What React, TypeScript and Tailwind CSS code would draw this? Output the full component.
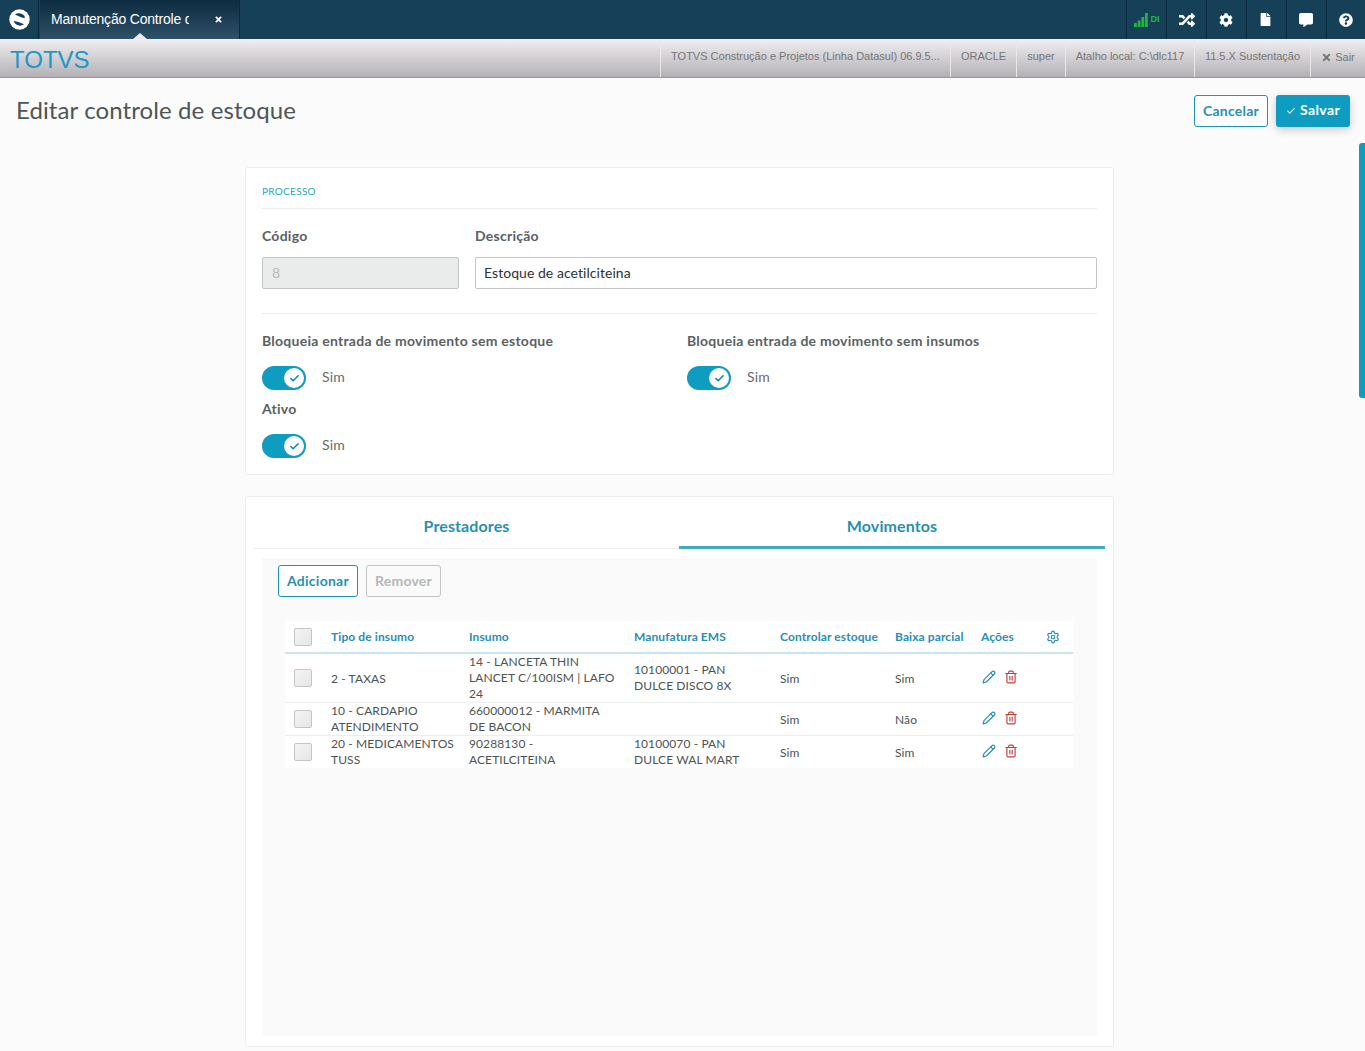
import { FaRandom, FaCog, FaFile, FaCommentAlt, FaQuestionCircle, FaTimes } from 'react-icons/fa'
import { Pencil, Trash2, Settings, Check } from 'lucide-react'

const font = "font-['Lato','Open_Sans',sans-serif]"

const topIcons = [
  <FaRandom key="random" className="text-[16px]" />,
  <FaCog key="cog" className="text-[14px] mr-[2px]" />,
  <FaFile key="file" className="text-[13px] mr-[2px]" />,
  <FaCommentAlt key="comment" className="text-[14px] mt-px mr-[2px]" />,
  <FaQuestionCircle key="help" className="text-[14px]" />,
]

const infoCells = [
  { label: 'TOTVS Construção e Projetos (Linha Datasul) 06.9.5...', w: 'w-[290px]' },
  { label: 'ORACLE', w: 'w-[66px]' },
  { label: 'super', w: 'w-[49px]' },
  { label: 'Atalho local: C:\\dlc117', w: 'w-[129px]' },
  { label: '11.5.X Sustentação', w: 'w-[116px]' },
]

const rows = [
  { tipo: '2 - TAXAS', insumo: '14 - LANCETA THIN LANCET C/100ISM | LAFO 24', ems: '10100001 - PAN DULCE DISCO 8X', estoque: 'Sim', baixa: 'Sim', h: 'h-[48px]' },
  { tipo: '10 - CARDAPIO ATENDIMENTO', insumo: '660000012 - MARMITA DE BACON', ems: '', estoque: 'Sim', baixa: 'Não', h: 'h-[32px]' },
  { tipo: '20 - MEDICAMENTOS TUSS', insumo: '90288130 - ACETILCITEINA', ems: '10100070 - PAN DULCE WAL MART', estoque: 'Sim', baixa: 'Sim', h: 'h-[32px]' },
]

const gridCols = 'grid grid-cols-[46px_138px_165px_146px_115px_86px_92px]'
const labelCls = 'text-[14px] leading-[16px] font-bold tracking-[0.25px] text-[#5a6163]'

function Toggle({ label }: { label: string }) {
  return (
    <div className="flex items-center h-[24px]">
      <div className="w-[44px] h-[24px] rounded-full bg-[#0f9cc1] flex items-center justify-end pr-[2px]">
        <div className="w-[20px] h-[20px] rounded-full bg-white flex items-center justify-center">
          <Check size={11} strokeWidth={3.5} className="text-[#1488aa]" />
        </div>
      </div>
      <span className="ml-[16px] pb-[4px] text-[14px] tracking-[0.2px] text-[#666b6c]">{label}</span>
    </div>
  )
}

function Checkbox() {
  return <div className="w-[18px] h-[18px] rounded-[2px] border border-[#c4c6c6] bg-gradient-to-br from-[#f4f4f4] to-[#e6e6e6]" />
}

export default function App() {
  return (
    <div className={`relative h-[1051px] overflow-hidden bg-[#fbfbfb] ${font}`}>
      {/* Top bar */}
      <div className="flex h-[39px] bg-[#154058] font-['Liberation_Sans',sans-serif]">
        <div className="w-[39px] flex items-center justify-center border-r border-[#0c2a3d]">
          <svg width="21" height="21" viewBox="0 0 21 21">
            <circle cx="10.5" cy="10.5" r="10.2" fill="#fff" />
            <path d="M6 5.8 C8.8 3.6 13 3.8 15.8 7.4 C15.9 8.4 15.6 9 15 9 C12 8.8 9 6.6 6 5.8 Z" fill="#154058" />
            <path d="M5.2 12 C8 12 12 14.4 15 15.2 C12.2 17.4 8 17.2 5.2 13.6 C5 13 5 12.4 5.2 12 Z" fill="#154058" />
          </svg>
        </div>
        <div className="relative w-[200px] ml-px flex items-center justify-between pl-[11px] pr-[16px] border-r border-[#0c2a3d] bg-gradient-to-b from-[#0d2b41] to-[#2f5269] text-white">
          <span className="w-[138px] overflow-hidden whitespace-nowrap text-[14px] tracking-[-0.2px]">Manutenção Controle de Estoque</span>
          <FaTimes className="text-[9px]" />
          <div className="absolute bottom-0 left-[93px] w-0 h-0 border-x-[7px] border-x-transparent border-b-[6px] border-b-[#e9e8ea]" />
        </div>
        <div className="flex-1" />
        <div className="w-[40px] flex items-center justify-center gap-[3px] border-l border-[#0c2a3d]">
          <svg width="14" height="14" viewBox="0 0 14 14" fill="#1fb83c">
            <rect x="0" y="10" width="2.8" height="4" />
            <rect x="3.7" y="7.5" width="2.8" height="6.5" />
            <rect x="7.4" y="4" width="2.8" height="10" />
            <rect x="11" y="0" width="2.8" height="14" />
          </svg>
          <span className="text-[9px] font-bold text-[#1fb83c]">DI</span>
        </div>
        {topIcons.map((icon, i) => (
          <div key={i} className={`${i === 4 ? 'w-[39px]' : 'w-[40px]'} flex items-center justify-center border-l border-[#0c2a3d] text-white`}>
            {icon}
          </div>
        ))}
      </div>

      {/* Sub bar */}
      <div className="flex items-stretch h-[39px] border-b border-[#98959a] bg-gradient-to-b from-[#f0eff1] to-[#b4b1b6] font-['Liberation_Sans',sans-serif]">
        <div className="flex-1 pl-[10px] text-[24px] leading-[42px] text-[#1d98c4]">TOTVS</div>
        {infoCells.map((c) => (
          <div key={c.label} className={`${c.w} flex items-center justify-center whitespace-nowrap border-l border-[#e8e7e9] pb-[4px] text-[11px] text-[#757575]`}>
            {c.label}
          </div>
        ))}
        <div className="w-[55px] flex items-center justify-center gap-[3px] border-l border-[#e8e7e9] pb-[2px] text-[11px] text-[#757575]">
          <FaTimes className="text-[11px]" /> Sair
        </div>
      </div>

      {/* Page header */}
      <div className="flex items-center justify-between h-[66px] pl-[16px] pr-[15px]">
        <h1 className="pb-[2px] text-[24px] tracking-[0.1px] text-[#4f5557]">Editar controle de estoque</h1>
        <div className="flex gap-[8px]">
          <button className="w-[74px] h-[32px] pb-[2px] rounded-[3px] border border-[#1b95b8] bg-white text-[14px] font-bold tracking-[0.25px] text-[#2a8fae]">Cancelar</button>
          <button className="w-[74px] h-[32px] pb-[3px] flex items-center justify-center gap-[4px] rounded-[3px] bg-[#0f9cc1] text-[14px] font-bold tracking-[0.4px] text-white shadow-[0_3px_8px_rgba(0,0,0,0.2)]">
            <Check size={10} strokeWidth={2.5} className="mt-[2px]" /> Salvar
          </button>
        </div>
      </div>

      {/* Content */}
      <div className="flex flex-col items-center pt-[23px] pr-[6px]">
        <div className="w-[869px] h-[308px] rounded-[3px] border border-[#eeeeee] bg-white px-[16px]">
          <div className="h-[41px] border-b border-[#eceeee] pt-[16px] text-[10px] leading-[14px] tracking-[0.3px] text-[#29a5b8]">PROCESSO</div>
          <div className="flex gap-[16px] h-[105px] border-b border-[#eceeee] pt-[19px]">
            <div className="w-[197px]">
              <div className={labelCls}>Código</div>
              <div className="mt-[13px] h-[32px] flex items-center pl-[9px] pb-[2px] rounded-[2px] border border-[#c1c5c5] bg-[#eaebeb] text-[14px] text-[#b5b8b8]">8</div>
            </div>
            <div className="flex-1">
              <div className={labelCls}>Descrição</div>
              <div className="mt-[13px] h-[32px] flex items-center pl-[8px] pb-[2px] rounded-[2px] border border-[#c1c5c5] bg-white text-[14px] tracking-[0.05px] text-[#2c3335]">Estoque de acetilciteina</div>
            </div>
          </div>
          <div className="flex pt-[19px]">
            <div className="w-[425px]">
              <div className={labelCls}>Bloqueia entrada de movimento sem estoque</div>
              <div className="mt-[17px]"><Toggle label="Sim" /></div>
              <div className={`mt-[11px] ${labelCls}`}>Ativo</div>
              <div className="mt-[17px]"><Toggle label="Sim" /></div>
            </div>
            <div>
              <div className={labelCls}>Bloqueia entrada de movimento sem insumos</div>
              <div className="mt-[17px]"><Toggle label="Sim" /></div>
            </div>
          </div>
        </div>

        <div className="mt-[21px] w-[869px] h-[551px] rounded-[3px] border border-[#eeeeee] bg-white pl-[8px] pr-[8px]">
          {/* Tabs */}
          <div className="flex h-[52px] border-b border-[#eceeee] text-[16px] font-bold tracking-[0.1px] text-[#2a8fae]">
            <div className="w-[425px] flex items-center justify-center pt-[7px]">Prestadores</div>
            <div className="w-[426px] flex items-center justify-center pt-[9px] border-b-[3px] border-[#3fabbd] h-[52px]">Movimentos</div>
          </div>

          <div className="mx-[8px] mt-[9px] h-[478px] bg-[#fafafa] pl-[16px]">
            <div className="flex gap-[8px] pt-[7px]">
              <button className="w-[80px] h-[32px] pb-[2px] rounded-[3px] border border-[#1b95b8] bg-white text-[14px] font-bold tracking-[0.25px] text-[#2a8fae]">Adicionar</button>
              <button className="w-[75px] h-[32px] pb-[2px] rounded-[3px] border border-[#c1c5c5] text-[14px] font-bold tracking-[0.2px] text-[#b5b8b8]">Remover</button>
            </div>

            <div className="ml-[7px] mt-[24px] w-[788px] bg-white text-[12px] leading-[16px] text-[#4d5355]">
              <div className={`${gridCols} h-[33px] items-center border-b-2 border-[#c7e5ec] font-bold text-[12px] tracking-[0.1px] text-[#2a8fae]`}>
                <div className="pl-[9px]"><Checkbox /></div>
                <div>Tipo de insumo</div>
                <div>Insumo</div>
                <div>Manufatura EMS</div>
                <div>Controlar estoque</div>
                <div>Baixa parcial</div>
                <div className="flex items-center justify-between pr-[13px]">
                  <span>Ações</span>
                  <Settings size={14} strokeWidth={2} />
                </div>
              </div>
              {rows.map((r, i) => (
                <div key={r.tipo} className={`${gridCols} ${r.h} items-center overflow-hidden tracking-[0.1px] ${i > 0 ? 'box-content border-t border-[#eceeee]' : ''}`}>
                  <div className="pl-[9px]"><Checkbox /></div>
                  <div className={`pr-[8px] ${i === 0 ? 'pt-[2px]' : ''}`}>{r.tipo}</div>
                  <div className="pr-[19px]">{r.insumo}</div>
                  <div className="pr-[32px]">{r.ems}</div>
                  <div className="pt-[2px]">{r.estoque}</div>
                  <div className="pt-[2px]">{r.baixa}</div>
                  <div className="flex items-center gap-[8px] pl-px pb-[2px]">
                    <Pencil size={14} strokeWidth={2} className="text-[#2a8fae]" />
                    <Trash2 size={14} strokeWidth={2} className="text-[#c4403f]" />
                  </div>
                </div>
              ))}
            </div>
          </div>
        </div>
      </div>

      {/* Scrollbar */}
      <div className="absolute right-0 top-[143px] w-[6px] h-[255px] rounded-l-[3px] bg-[#0f9cc1]" />
    </div>
  )
}
